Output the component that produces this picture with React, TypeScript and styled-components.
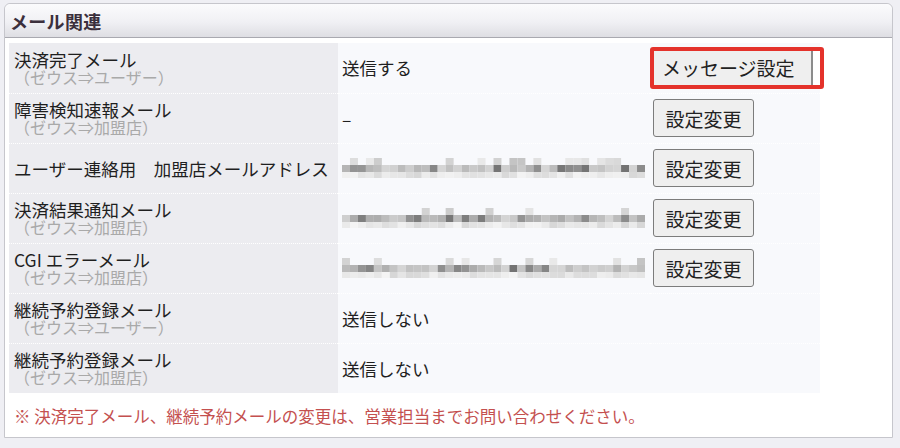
import React from 'react'
import styled, { createGlobalStyle } from 'styled-components'

interface MailRow {
  label: string,
  sub?: string,
  value?: string,
  blurred?: number,
  action?: 'change' | 'message',
}

const rows: MailRow[] = [
  { label: '決済完了メール', sub: '（ゼウス⇒ユーザー）', value: '送信する', action: 'message' },
  { label: '障害検知速報メール', sub: '（ゼウス⇒加盟店）', value: '–', action: 'change' },
  { label: 'ユーザー連絡用　加盟店メールアドレス', blurred: 1, action: 'change' },
  { label: '決済結果通知メール', sub: '（ゼウス⇒加盟店）', blurred: 2, action: 'change' },
  { label: 'CGI エラーメール', sub: '（ゼウス⇒加盟店）', blurred: 3, action: 'change' },
  { label: '継続予約登録メール', sub: '（ゼウス⇒ユーザー）', value: '送信しない' },
  { label: '継続予約登録メール', sub: '（ゼウス⇒加盟店）', value: '送信しない' },
]

// pixelated "mosaic" that hides the mail address
const Mosaic: React.FC<{ seed: number }> = ({ seed }) => {
  let s = seed * 7919 + 104729
  const rnd = () => {
    s = (s * 9301 + 49297) % 233280
    return s / 233280
  }
  const cells: React.ReactNode[] = []
  const cols = 38
  for (let i = 0; i < cols; i++) {
    const x = i * 8
    const dark = rnd() > 0.8
    const mid = dark ? 115 + Math.floor(rnd() * 35) : 170 + Math.floor(rnd() * 45)
    cells.push(<rect key={`m${i}`} x={x} y={8} width={8} height={7} fill={`rgb(${mid},${mid},${mid})`} />)
    if (rnd() > 0.7) {
      const g = 195 + Math.floor(rnd() * 40)
      cells.push(<rect key={`t${i}`} x={x} y={1} width={8} height={7} fill={`rgb(${g},${g},${g})`} />)
    }
    const bot = 215 + Math.floor(rnd() * 30)
    cells.push(<rect key={`b${i}`} x={x} y={15} width={8} height={6} fill={`rgb(${bot},${bot},${bot})`} />)
  }
  return (
    <MosaicSvg width={303} height={22} viewBox="0 0 304 22" preserveAspectRatio="none">
      {cells}
    </MosaicSvg>
  )
}

export default function App() {
  return (
    <>
      <GlobalStyle />
      <Panel>
        <PanelHeader>
          <PanelTitle>メール関連</PanelTitle>
        </PanelHeader>
        <PanelBody>
          <Table>
            <tbody>
              {rows.map((r, i) => (
                <Row key={i} $last={i === rows.length - 1}>
                  <LabelCell>
                    <MainLabel>{r.label}</MainLabel>
                    {r.sub && <SubLabel>{r.sub}</SubLabel>}
                  </LabelCell>
                  <ValueCell>
                    {r.blurred ? <Mosaic seed={r.blurred} /> : r.value}
                  </ValueCell>
                  <ActionCell>
                    {r.action === 'change' && <Button>設定変更</Button>}
                    {r.action === 'message' && (
                      <Highlight>
                        <MessageButton>メッセージ設定</MessageButton>
                      </Highlight>
                    )}
                  </ActionCell>
                </Row>
              ))}
            </tbody>
          </Table>
          <Note>※ 決済完了メール、継続予約メールの変更は、営業担当までお問い合わせください。</Note>
        </PanelBody>
      </Panel>
    </>
  )
}

const GlobalStyle = createGlobalStyle`
  body {
    margin: 0;
    background: #efeff4;
    font-family: 'Noto Sans CJK JP', 'Noto Sans', sans-serif;
    color: #222;
  }
`;

const Panel = styled.div`
  margin: 3px 0 0 4px;
  width: 889px;
  height: 435px;
  box-sizing: border-box;
  background: #fff;
  border: 1px solid #c6c6cc;
  border-radius: 6px 6px 0 0;
`;

const PanelHeader = styled.div`
  height: 33px;
  display: flex;
  align-items: center;
  padding-left: 5px;
  background: linear-gradient(#fbfbfd, #f0f0f4 55%, #dedee3);
  border-bottom: 1px solid #a9a9b0;
  border-radius: 6px 6px 0 0;
`;

const PanelTitle = styled.h2`
  margin: 0;
  font-size: 18px;
  font-weight: 700;
  color: #3b2f3c;
  letter-spacing: 0.3px;
`;

const PanelBody = styled.div`
  padding: 5px 0 0 4px;
`;

const Table = styled.table`
  width: 811px;
  border-collapse: collapse;
  table-layout: fixed;
`;

const Row = styled.tr<{ $last?: boolean }>`
  height: 50px;
  border-bottom: ${p => (p.$last ? 'none' : '1px dotted #fff')};
`;

const LabelCell = styled.th`
  width: 329px;
  padding: 0 0 0 5px;
  background: #ececf0;
  text-align: left;
  font-weight: 400;
  vertical-align: middle;
  box-sizing: border-box;
`;

const MainLabel = styled.div`
  font-size: 17.5px;
  line-height: 19px;
  color: #1f1f1f;
  white-space: nowrap;
`;

const SubLabel = styled.div`
  font-size: 16px;
  line-height: 17px;
  color: #a9a9a9;
  white-space: nowrap;
`;

const ValueCell = styled.td`
  width: 312px;
  padding: 0 0 0 4px;
  background: #f8f9fc;
  font-size: 17.5px;
  color: #1f1f1f;
  vertical-align: middle;
  box-sizing: border-box;
`;

const ActionCell = styled.td`
  padding: 0;
  background: #f8f9fc;
  vertical-align: middle;
`;

const MosaicSvg = styled.svg`
  display: block;
  filter: blur(0.6px);
`;

const Button = styled.button`
  margin-left: 3px;
  height: 38px;
  width: 101px;
  padding: 0;
  border: 1px solid #7c7c7c;
  border-radius: 3px;
  background: #efefef;
  font-family: 'Noto Sans CJK JP', sans-serif;
  font-size: 19px;
  color: #222;
`;

const Highlight = styled.span`
  display: inline-flex;
  width: 174px;
  height: 42px;
  box-sizing: border-box;
  border: 4px solid #e4322b;
  border-radius: 3px;
  background: #fff;
  overflow: hidden;
`;

const MessageButton = styled.button`
  width: 159px;
  height: 100%;
  padding: 0 0 0 8px;
  text-align: left;
  border: none;
  border-right: 2px solid #8c8c8c;
  background: #efefef;
  font-family: 'Noto Sans CJK JP', sans-serif;
  font-size: 19px;
  color: #222;
`;

const Note = styled.p`
  margin: 11px 0 0 5px;
  font-size: 16.5px;
  color: #c4504f;
  white-space: nowrap;
`;
